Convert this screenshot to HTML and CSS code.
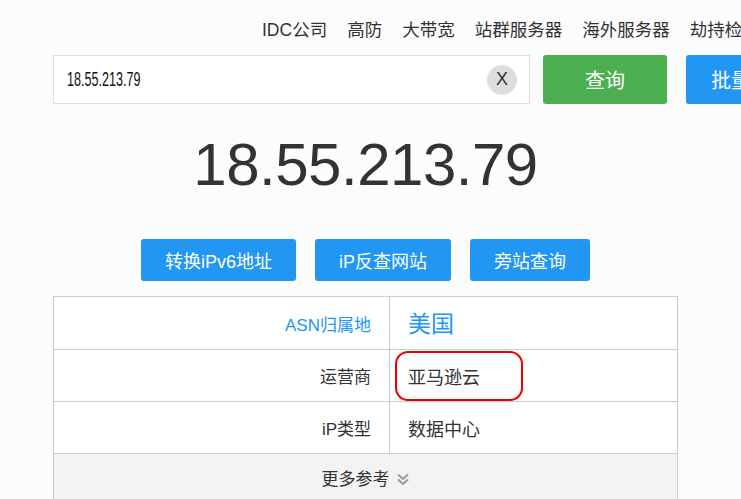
FILE: index.html
```html
<!DOCTYPE html>
<html lang="zh-CN">
<head>
<meta charset="utf-8">
<title>IP查询</title>
<link rel="stylesheet" href="styles.css">
</head>
<body>
<nav class="nav">
  <a>IDC公司</a>
  <a>高防</a>
  <a>大带宽</a>
  <a>站群服务器</a>
  <a>海外服务器</a>
  <a>劫持检测</a>
</nav>
<main class="main">
  <div class="search">
    <div class="input">
      <span class="input-text">18.55.213.79</span>
      <span class="clear">X</span>
    </div>
    <button class="btn btn-green">查询</button>
    <button class="btn btn-blue btn-batch">批量查询</button>
  </div>
  <h1 class="ip">18.55.213.79</h1>
  <div class="actions">
    <button class="btn btn-blue btn-act">转换iPv6地址</button>
    <button class="btn btn-blue btn-act">iP反查网站</button>
    <button class="btn btn-blue btn-act">旁站查询</button>
  </div>
  <div class="table">
    <div class="row">
      <div class="label label-blue">ASN归属地</div>
      <div class="value value-blue">美国</div>
    </div>
    <div class="row">
      <div class="label">运营商</div>
      <div class="value"><span class="circled">亚马逊云</span></div>
    </div>
    <div class="row">
      <div class="label">iP类型</div>
      <div class="value">数据中心</div>
    </div>
    <div class="more">更多参考
      <svg class="chev" width="14" height="14" viewBox="0 0 14 14"><path d="M2 2.5 L7 7 L12 2.5 M2 7.5 L7 12 L12 7.5" fill="none" stroke="#999" stroke-width="2"/></svg>
    </div>
  </div>
</main>
</body>
</html>
```

FILE: styles.css
```css
html, body {
  margin: 0;
  padding: 0;
  background: #fcfcfc;
  overflow: hidden;
  width: 741px;
  height: 499px;
}
body {
  font-family: "Liberation Sans", "Noto Sans CJK SC", sans-serif;
  color: #333;
}
.nav {
  display: flex;
  gap: 20px;
  white-space: nowrap;
  padding: 19px 0 0 262px;
  height: 36px;
  font-size: 17.5px;
  line-height: 22px;
  box-sizing: border-box;
}
.nav a {
  color: #333;
  flex: none;
}
.main {
  margin-left: 53px;
  width: 625px;
}
.search {
  display: flex;
  align-items: stretch;
  height: 49px;
  margin-top: 19px;
  width: 800px;
}
.input {
  flex: none;
  width: 477px;
  box-sizing: border-box;
  border: 1px solid #ddd;
  background: #fff;
  display: flex;
  align-items: center;
  justify-content: space-between;
  padding: 0 12px 0 13px;
}
.input-text {
  display: inline-block;
  font-family: "Liberation Sans", sans-serif;
  font-size: 20px;
  color: #111;
  transform: scaleX(0.63);
  transform-origin: left center;
}
.clear {
  width: 30px;
  height: 30px;
  border-radius: 50%;
  background: #ddd;
  color: #333;
  font-size: 18px;
  display: flex;
  align-items: center;
  justify-content: center;
}
.btn {
  border: none;
  color: #fff;
  font-family: "Liberation Sans", "Noto Sans CJK SC", sans-serif;
  border-radius: 3px;
  padding: 0;
  flex: none;
}
.btn-green {
  background: #4caf50;
  width: 124px;
  margin-left: 13px;
  font-size: 20px;
}
.btn-blue {
  background: #2196f3;
}
.btn-batch {
  width: 124px;
  margin-left: 19px;
  font-size: 20px;
  text-align: left;
  padding-left: 25px;
}
.ip {
  margin: 22px 0 0;
  text-align: center;
  font-weight: normal;
  font-size: 60px;
  line-height: 78px;
  color: #333;
  letter-spacing: -0.5px;
}
.actions {
  display: flex;
  justify-content: center;
  gap: 19px;
  margin-top: 35px;
}
.btn-act {
  height: 42px;
  font-size: 18px;
  padding: 0 24px;
}
.table {
  margin-top: 15px;
  border: 1px solid #ccc;
  background: #fff;
}
.row {
  display: grid;
  grid-template-columns: 336px 1fr;
  border-bottom: 1px solid #ccc;
  height: 51px;
}
.row:first-child {
  height: 52px;
}
.label {
  text-align: right;
  padding-right: 18px;
  border-right: 1px solid #ccc;
  font-size: 17px;
  display: flex;
  align-items: center;
  justify-content: flex-end;
}
.label-blue {
  color: #2196f3;
}
.value {
  font-size: 18px;
  display: flex;
  align-items: center;
  padding-left: 18px;
}
.value-blue {
  color: #2196f3;
  font-size: 23px;
  padding-bottom: 3px;
}
.circled {
  margin-left: -13px;
  border: 2px solid #e00;
  border-radius: 13px;
  padding: 10px 41px 10px 11px;
}
.more {
  background: #f3f3f3;
  height: 50px;
  display: flex;
  align-items: center;
  justify-content: center;
  gap: 6px;
  font-size: 17px;
  padding-bottom: 3px;
  box-sizing: border-box;
}
.chev {
  margin-top: 2px;
}
```
